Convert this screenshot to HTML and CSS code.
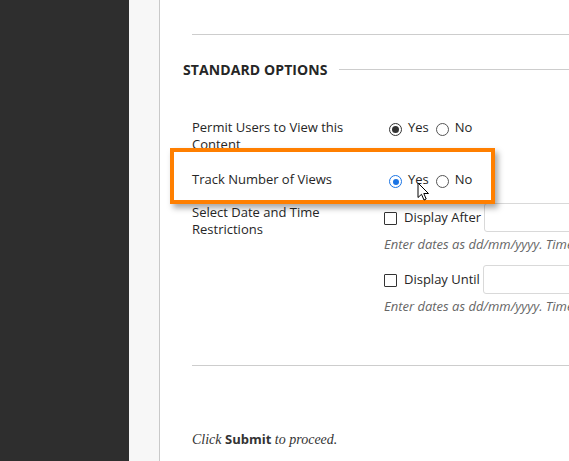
FILE: index.html
```html
<!DOCTYPE html>
<html>
<head>
<meta charset="utf-8">
<link rel="stylesheet" href="styles.css">
</head>
<body>
<div class="app">
  <aside class="nav"></aside>
  <div class="strip"></div>
  <main class="content">
    <div class="rule"></div>
    <div class="section-head">
      <h2 class="section-title">STANDARD OPTIONS</h2>
      <span class="section-line"></span>
    </div>

    <div class="field field-permit">
      <div class="field-label">Permit Users to View this Content</div>
      <div class="field-controls">
        <span class="radio radio-checked"></span><span class="opt">Yes</span>
        <span class="radio"></span><span class="opt">No</span>
      </div>
    </div>

    <div class="field field-highlight">
      <div class="field-label">Track Number of Views</div>
      <div class="field-controls">
        <span class="radio radio-blue"></span><span class="opt">Yes</span>
        <span class="radio"></span><span class="opt">No</span>
      </div>
      <svg class="cursor" width="13" height="19" viewBox="0 0 13 19">
        <path d="M1 1 L1 15.5 L4.5 12.3 L7 18 L9.2 17 L6.8 11.5 L11.5 11.5 Z" fill="#fff" stroke="#000" stroke-width="1" stroke-linejoin="round"/>
      </svg>
    </div>

    <div class="field field-dates">
      <div class="field-label field-label-dates">Select Date and Time Restrictions</div>
      <div class="date-controls">
        <div class="date-row">
          <span class="checkbox"></span><span class="date-label">Display After</span>
          <span class="text-input"></span>
        </div>
        <div class="help">Enter dates as dd/mm/yyyy. Time may be entered in any increment.</div>
        <div class="date-row date-row-second">
          <span class="checkbox"></span><span class="date-label">Display Until</span>
          <span class="text-input"></span>
        </div>
        <div class="help">Enter dates as dd/mm/yyyy. Time may be entered in any increment.</div>
      </div>
    </div>

    <div class="rule rule-bottom"></div>
    <p class="submit-note">Click <b>Submit</b> to proceed.</p>
  </main>
</div>
</body>
</html>
```

FILE: styles.css
```css
html, body {
  margin: 0;
  padding: 0;
  background: #fff;
}

.app {
  display: flex;
  width: 569px;
  height: 461px;
  overflow: hidden;
  font-family: "Open Sans", "Liberation Sans", sans-serif;
  font-size: 13px;
  line-height: 17px;
  color: #262626;
}

.nav {
  flex: 0 0 129px;
  background: #2e2e2e;
}

.strip {
  flex: 0 0 30px;
  background: #f7f7f7;
  border-right: 1px solid #c9c9c9;
}

.content {
  flex: 1 1 auto;
  min-width: 0;
  padding: 34px 0 0 32px;
  overflow: hidden;
}

.rule {
  height: 1px;
  background: #cdcdcd;
}

.section-head {
  display: flex;
  align-items: center;
  margin: 26px 0 0 -9px;
  height: 18px;
}

.section-title {
  margin: 0;
  font-size: 14px;
  line-height: 18px;
  font-weight: 700;
  letter-spacing: 0.1px;
  color: #262626;
  white-space: nowrap;
}

.section-line {
  flex: 1 1 auto;
  height: 1px;
  background: #cdcdcd;
  margin: -1px 0 0 11px;
}

.field {
  display: flex;
  align-items: flex-start;
}

.field-label {
  flex: 0 0 192px;
  box-sizing: border-box;
  padding-right: 20px;
}

.field-permit {
  margin-top: 40px;
}

.field-controls {
  display: flex;
  align-items: flex-start;
  white-space: nowrap;
}

.radio {
  box-sizing: border-box;
  width: 13px;
  height: 13px;
  margin: 4px 6px 0 5px;
  border: 1px solid #555;
  border-radius: 50%;
  background: #fff;
  display: flex;
  align-items: center;
  justify-content: center;
}

.radio + .opt + .radio {
  margin-left: 7px;
}

.radio-checked {
  border-color: #333;
}

.radio-checked::after {
  content: "";
  width: 7px;
  height: 7px;
  border-radius: 50%;
  background: #333;
}

.radio-blue {
  border: 1.5px solid #1b74e4;
}

.radio-blue::after {
  content: "";
  width: 6px;
  height: 6px;
  border-radius: 50%;
  background: #1b74e4;
}

.field-highlight {
  position: relative;
  box-sizing: border-box;
  width: 325px;
  margin: -5px 0 0 -22px;
  padding: 19px 0 12px 18px;
  border: 4px solid #ff7f00;
  background: #fff;
  box-shadow: 3px 4px 6px rgba(0, 0, 0, 0.35);
}

.cursor {
  position: absolute;
  left: 243px;
  top: 30px;
}

.field-dates {
  margin-top: -1px;
}

.field-label-dates {
  padding-top: 1px;
}

.date-controls {
  display: flex;
  flex-direction: column;
}

.date-row {
  display: flex;
  align-items: center;
  white-space: nowrap;
  height: 29px;
}

.date-row-second {
  margin-top: 12px;
}

.checkbox {
  box-sizing: border-box;
  width: 13px;
  height: 13px;
  border: 1px solid #333;
  border-radius: 1px;
  margin: 1px 7px 0 0;
  background: #fff;
}

.date-label {
  margin-right: 3px;
}

.text-input {
  flex: 0 0 160px;
  height: 29px;
  box-sizing: border-box;
  border: 1px solid #d9d9d9;
  border-radius: 3px;
  background: #fff;
}

.help {
  margin-top: 4px;
  font-style: italic;
  color: #666;
  white-space: nowrap;
}

.rule-bottom {
  margin-top: 50px;
}

.submit-note {
  margin: 64px 0 0 0;
  font-family: "Liberation Serif", "Times New Roman", serif;
  font-style: italic;
  font-size: 14px;
  line-height: 18px;
  color: #333;
}

.submit-note b {
  font-family: "Open Sans", "Liberation Sans", sans-serif;
  font-style: normal;
  font-weight: 700;
  font-size: 13px;
}
```
